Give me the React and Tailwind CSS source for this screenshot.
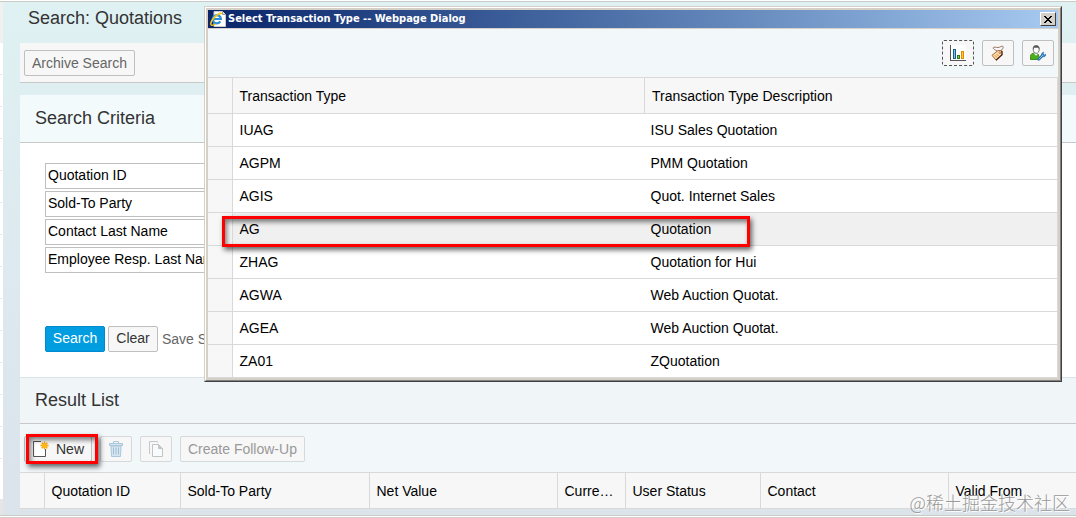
const transactionTypes = [
    { type: 'IUAG', description: 'ISU Sales Quotation' },
    { type: 'AGPM', description: 'PMM Quotation' },
    { type: 'AGIS', description: 'Quot. Internet Sales' },
    { type: 'AG', description: 'Quotation' },
    { type: 'ZHAG', description: 'Quotation for Hui' },
    { type: 'AGWA', description: 'Web Auction Quotat.' },
    { type: 'AGEA', description: 'Web Auction Quotat.' },
    { type: 'ZA01', description: 'ZQuotation' },
]

const criteria = ['Quotation ID', 'Sold-To Party', 'Contact Last Name', 'Employee Resp. Last Name']

const resultColumns = [
    { label: 'Quotation ID', width: 'w-[136px]' },
    { label: 'Sold-To Party', width: 'w-[189px]' },
    { label: 'Net Value', width: 'w-[188px]' },
    { label: 'Curre…', width: 'w-[68px]' },
    { label: 'User Status', width: 'w-[135px]' },
    { label: 'Contact', width: 'w-[188px]' },
    { label: 'Valid From', width: '' },
]

function IePageIcon() {
    return (
        <svg width="16" height="16" viewBox="0 0 16 16" aria-hidden="true">
            <path d="M4 .5h8.500l3 3v12H4z" fill="#fff" stroke="#c9c9c9" />
            <path d="M12.500.5v3h3" fill="#ddd" stroke="#999" />
            <path d="M10.300 10.400A4.100 4.100 0 1 1 10.900 8H3.500" fill="none" stroke="#2b8fd8" strokeWidth="2.200" />
            <path d="M1.200 14c-1.500-2 2-8 7-10.800 1.800-1 3.300-1.100 3.600-.2" fill="none" stroke="#f2c414" strokeWidth="1.600" />
            <path d="M1.200 14c1 .8 3-.1 4.300-1" fill="none" stroke="#f2c414" strokeWidth="1.500" />
        </svg>
    )
}

function ChartIcon() {
    return (
        <svg width="16" height="16" viewBox="0 0 16 16" shapeRendering="crispEdges" aria-hidden="true">
            <path d="M0 0h16v16H0z" fill="#fff" />
            <path d="M0 0h1v15h15v1H0z" fill="#555" />
            <path d="M3 4h3v10H3z" fill="#155f8d" />
            <path d="M4 5h1v8H4z" fill="#7cc1e6" />
            <path d="M7 10h3v4H7z" fill="#2b7a1c" />
            <path d="M8 11h1v2H8z" fill="#8ac63f" />
            <path d="M11 6h3v8h-3z" fill="#e68a00" />
            <path d="M12 7h1v6h-1z" fill="#ffc83d" />
        </svg>
    )
}

function TagIcon() {
    return (
        <svg width="16" height="16" viewBox="0 0 16 16" aria-hidden="true">
            <path
                d="M9.500 7C6.500 5.500 3 4.500 3.200 2.800 3.500 1.500 6 2.500 8 2.500c2.500 0 3.500-2 4.800-1.200 1.200.9-.3 3.200-2.800 5.200"
                fill="none"
                stroke="#8f6a55"
                strokeWidth=".9"
            />
            <path d="M2 10.300 8 5.500l3.800.2.200 4L6 15.200z" fill="#fbd9a5" stroke="#a55f2c" strokeWidth=".9" />
            <path d="m6 15.300 6.100-5.500-.2-3.800" fill="none" stroke="#4b2413" strokeWidth="1.200" />
            <path d="m4.800 10.300 2.200 2.200M6.600 9l2 2" stroke="#d08b45" strokeWidth=".9" />
            <circle cx="9.900" cy="7.600" r=".9" fill="#fff" stroke="#7a3a1a" strokeWidth=".6" />
        </svg>
    )
}

function PersonalizeIcon() {
    return (
        <svg width="16" height="16" viewBox="0 0 16 16" aria-hidden="true">
            <path d="M.5 14.500v-2.800C.5 9 2 8.200 5 8c2.500 0 3.800 1.200 3.800 3.500v3z" fill="#4caf1a" stroke="#3f8f20" />
            <path d="M4 7.500h4l-1 2.800H5z" fill="#f4f4f4" />
            <path d="M3.200 4C3.200 1.500 4.200.6 6.200.6s3 1 3 3.400-1 4.300-3 4.300-3-1.900-3-4.300z" fill="#fff" stroke="#777" />
            <path d="M3 5C2.600 1.800 3.800.4 6.200.4S9.700 1.800 9.400 5l-1-2.200H4z" fill="#555" />
            <path d="m8.700 14.300 4-4" stroke="#2a6ea8" strokeWidth="2.800" strokeLinecap="round" />
            <path
                d="M13.800 7.200c-1.700.2-2.600 1.500-2.200 3 .4 1.400 2 2 3.200 1.300 1-.6 1.300-1.500 1.200-2.500l-1.700 1-1.200-1z"
                fill="#3f87c3"
                stroke="#2a6ea8"
                strokeWidth=".6"
            />
            <path d="m8.700 14.300 4.300-4.300" stroke="#8cc4ec" strokeWidth="1" />
        </svg>
    )
}

function NewPageIcon() {
    return (
        <svg width="16" height="16" viewBox="0 0 16 16" aria-hidden="true">
            <path d="M8 .5H.5v15h12V8" fill="#fff" stroke="#555" />
            <path d="M11.500.5v8M7.500 4.500h8M8.700 1.700l5.600 5.600M14.300 1.700 8.700 7.300" stroke="#f09a00" strokeWidth="1.300" />
            <circle cx="11.500" cy="4.500" r="2.800" fill="#ffb81c" />
        </svg>
    )
}

function TrashIcon() {
    return (
        <svg width="14" height="16" viewBox="0 0 14 16" aria-hidden="true">
            <path d="M2 5h10l-.5 10.500h-9z" fill="#d5e6f2" stroke="#a9c6da" />
            <path d="M.5 2.500h13v2H.5z" fill="#d5e6f2" stroke="#a9c6da" />
            <path d="M4.500 2.500v-2h5v2" fill="none" stroke="#a9c6da" />
            <path d="M4.500 6.500v7M7 6.500v7M9.500 6.500v7" stroke="#a0bfd5" />
        </svg>
    )
}

function CopyIcon() {
    return (
        <svg width="16" height="16" viewBox="0 0 16 16" aria-hidden="true">
            <path d="M2.500 12.500h-1V.5h8v1" fill="none" stroke="#c4c8ca" />
            <path d="M4.500 3.500h6l4 4v8h-10z" fill="#f8fafb" stroke="#c0c4c6" />
            <path d="M10.500 3.500v4h4" fill="#c4c8ca" stroke="#c0c4c6" />
        </svg>
    )
}

function IconButton({ label, focused, disabled, children }) {
    return (
        <button
            type="button"
            aria-label={label}
            disabled={disabled}
            className={`flex h-[26px] w-8 items-center justify-center rounded-xs border bg-[#f7f7f7] ${
                focused ? 'border-dashed border-[#555]' : disabled ? 'border-[#d5d9db]' : 'border-[#bfbfbf]'
            }`}
        >
            {children}
        </button>
    )
}

function SideStrip() {
    return (
        <div className="flex w-[3px] shrink-0 flex-col bg-white">
            <div className="h-[41px] bg-[#f0f0ee]" />
            {Array.from({ length: 13 }, (_, i) => (
                <div key={i} className="h-8 w-[2px] border-b border-[#e5e5e5]" />
            ))}
            <div className="mt-auto h-4 bg-[#e5e5e5]" />
        </div>
    )
}

function SearchPage() {
    return (
        <main className="min-w-0 flex-1">
            <h1 className="flex h-[41px] items-start pt-1 pl-2 text-lg leading-6">Search: Quotations</h1>

            <div className="flex h-10 items-center border-b border-[#c8c8c8] bg-[#f7f7f7] px-1">
                <button type="button" className="h-[26px] rounded-xs border border-[#bfbfbf] px-[7px] text-sm text-[#666]">
                    Archive Search
                </button>
            </div>

            <section className="mt-3 bg-white">
                <h2 className="flex h-12 items-center border-b border-[#c8c8c8] bg-[#f2fafc] px-[15px] pb-[2px] text-lg">
                    Search Criteria
                </h2>
                <form className="h-[234px] px-[25px] pt-5" onSubmit={(e) => e.preventDefault()}>
                    <div className="flex flex-col gap-[2px]">
                        {criteria.map((name) => (
                            <select
                                key={name}
                                aria-label={`Criterion ${name}`}
                                defaultValue={name}
                                className="h-[26px] w-[200px] appearance-none border border-[#bfbfbf] bg-white px-[2px] pb-[2px] text-sm text-black"
                            >
                                {criteria.map((option) => (
                                    <option key={option}>{option}</option>
                                ))}
                            </select>
                        ))}
                    </div>
                    <div className="mt-[53px] flex items-center text-sm">
                        <button
                            type="submit"
                            className="h-[26px] w-[60px] rounded-xs border border-[#0088d1] bg-[#009de0] pb-[2px] text-white"
                        >
                            Search
                        </button>
                        <button
                            type="reset"
                            className="ml-[3px] h-[26px] w-[50px] rounded-xs border border-[#bfbfbf] bg-[#f7f7f7] pb-[2px]"
                        >
                            Clear
                        </button>
                        <label htmlFor="save-search" className="ml-1 whitespace-nowrap text-[#666]">
                            Save Search
                        </label>
                        <input id="save-search" className="ml-2 h-[26px] w-40 border border-[#bfbfbf] bg-white px-1" />
                    </div>
                </form>
            </section>

            <section className="border-t border-[#d9e3e8] bg-[#f2f7fa]">
                <h2 className="flex h-[46px] items-center border-b border-[#c8c8c8] bg-[#f0f5f8] px-[15px] pb-[2px] text-lg">
                    Result List
                </h2>
                <div className="flex h-12 items-center gap-2 px-1 pt-[2px] text-sm">
                    <div className="relative">
                        <button
                            type="button"
                            className="flex h-[26px] w-[68px] items-center gap-[7px] rounded-xs border border-[#bfbfbf] bg-[#f7f7f7] pl-2"
                        >
                            <NewPageIcon />
                            New
                        </button>
                        <div className="pointer-events-none absolute -top-[2px] left-[2px] z-10 h-[30px] w-[72px] border-3 border-[#f00] shadow-[2px_3px_5px_rgba(0,0,0,0.6),inset_2px_3px_5px_rgba(0,0,0,0.5)]" />
                    </div>
                    <IconButton label="Delete" disabled>
                        <TrashIcon />
                    </IconButton>
                    <IconButton label="Copy" disabled>
                        <CopyIcon />
                    </IconButton>
                    <button
                        type="button"
                        disabled
                        className="h-[26px] rounded-xs border border-[#d5d9db] bg-[#f7f7f7] px-[7px] text-[#999]"
                    >
                        Create Follow-Up
                    </button>
                </div>
                <table className="w-full table-fixed border-collapse bg-[#f7f7f7] text-sm text-black">
                    <thead>
                        <tr className="h-[36px] border-y border-[#d9d9d9]">
                            <th className="w-[24px]" aria-label="Selection" />
                            {resultColumns.map((col) => (
                                <th
                                    key={col.label}
                                    scope="col"
                                    className={`border-l border-[#d9d9d9] pl-[7px] text-left font-normal ${col.width}`}
                                >
                                    {col.label}
                                </th>
                            ))}
                        </tr>
                    </thead>
                </table>
            </section>
        </main>
    )
}

function TransactionDialog() {
    return (
        <div
            role="dialog"
            aria-labelledby="dialog-title"
            className="absolute top-[6px] right-[14px] left-[204px] border border-t-[#d4d0c8] border-r-[#404040] border-b-[#404040] border-l-[#d4d0c8]"
        >
            <div className="border border-t-white border-r-[#808080] border-b-[#808080] border-l-white bg-[#d4d0c8] p-[2px]">
                <div className="flex h-[18px] items-center bg-linear-to-r from-[#0a246a] to-[#a6caf0] pr-[2px] pl-[2px]">
                    <IePageIcon />
                    <h2
                        id="dialog-title"
                        className="ml-[2px] flex-1 font-['DejaVu_Sans_Condensed','DejaVu_Sans',sans-serif] text-[11px] leading-4 font-bold text-white"
                    >
                        Select Transaction Type -- Webpage Dialog
                    </h2>
                    <button
                        type="button"
                        aria-label="Close"
                        className="flex h-[14px] w-4 items-center justify-center border border-t-white border-r-[#404040] border-b-[#404040] border-l-white bg-[#d4d0c8]"
                    >
                        <svg width="8" height="7" viewBox="0 0 8 7" shapeRendering="crispEdges" aria-hidden="true">
                            <path
                                d="M0 0h2v1h1v1h2V1h1V0h2v1H7v1H6v1H5v1h1v1h1v1h1v1H6V6H5V5H3v1H2v1H0V6h1V5h1V4h1V3H2V2H1V1H0z"
                                fill="#000"
                            />
                        </svg>
                    </button>
                </div>

                <div className="mt-px flex h-12 items-center justify-end gap-2 bg-[#f2f7fa] pr-1">
                    <IconButton label="Chart" focused>
                        <ChartIcon />
                    </IconButton>
                    <IconButton label="Tag">
                        <TagIcon />
                    </IconButton>
                    <IconButton label="Personalize">
                        <PersonalizeIcon />
                    </IconButton>
                </div>

                <div className="relative border-r border-[#d9d9d9]">
                    <table className="w-full table-fixed border-collapse bg-white text-sm text-black">
                        <thead>
                            <tr className="h-9 border-y border-[#d9d9d9] bg-[#f7f7f7]">
                                <th className="w-[24px]" aria-label="Selection" />
                                <th scope="col" className="border-l border-[#d9d9d9] pl-[7px] text-left font-normal">
                                    Transaction Type
                                </th>
                                <th scope="col" className="border-l border-[#d9d9d9] pl-[7px] text-left font-normal">
                                    Transaction Type Description
                                </th>
                            </tr>
                        </thead>
                        <tbody>
                            {transactionTypes.map((row) => (
                                <tr
                                    key={row.type}
                                    className={`h-[33px] border-b border-[#d9d9d9] ${row.type === 'AG' ? 'bg-[#f0f0f0]' : ''}`}
                                >
                                    <td className="bg-[#f7f7f7]" />
                                    <td className="border-l border-[#d9d9d9] pl-[7px]">{row.type}</td>
                                    <td className="pl-[6px]">{row.description}</td>
                                </tr>
                            ))}
                        </tbody>
                    </table>
                    {/* marks the AG row */}
                    <div className="pointer-events-none absolute top-[139px] left-[14px] h-[31px] w-[528px] border-3 border-[#f00] shadow-[2px_3px_5px_rgba(0,0,0,0.6),inset_2px_3px_5px_rgba(0,0,0,0.5)]" />
                </div>
            </div>
        </div>
    )
}

export default function App() {
    return (
        <div className="relative overflow-hidden bg-white pt-px font-['Liberation_Sans',Arial,sans-serif] text-[#333]">
            <div className="flex border-y border-[#c9cbc6] bg-white">
                <SideStrip />
                <div className="flex flex-1 bg-linear-to-b from-[#dff1f3] to-[#dbe3eb] pb-[6px] pl-[17px]">
                    <SearchPage />
                </div>
            </div>
            <div className="mt-px h-px bg-[#d4d0c8]" />
            <TransactionDialog />
            <div className="pointer-events-none absolute right-[6px] bottom-1 font-['Noto_Sans_CJK_SC',sans-serif] text-lg leading-6 font-light text-[#999] [text-shadow:1px_1px_0_#fff]">
                @稀土掘金技术社区
            </div>
        </div>
    )
}
